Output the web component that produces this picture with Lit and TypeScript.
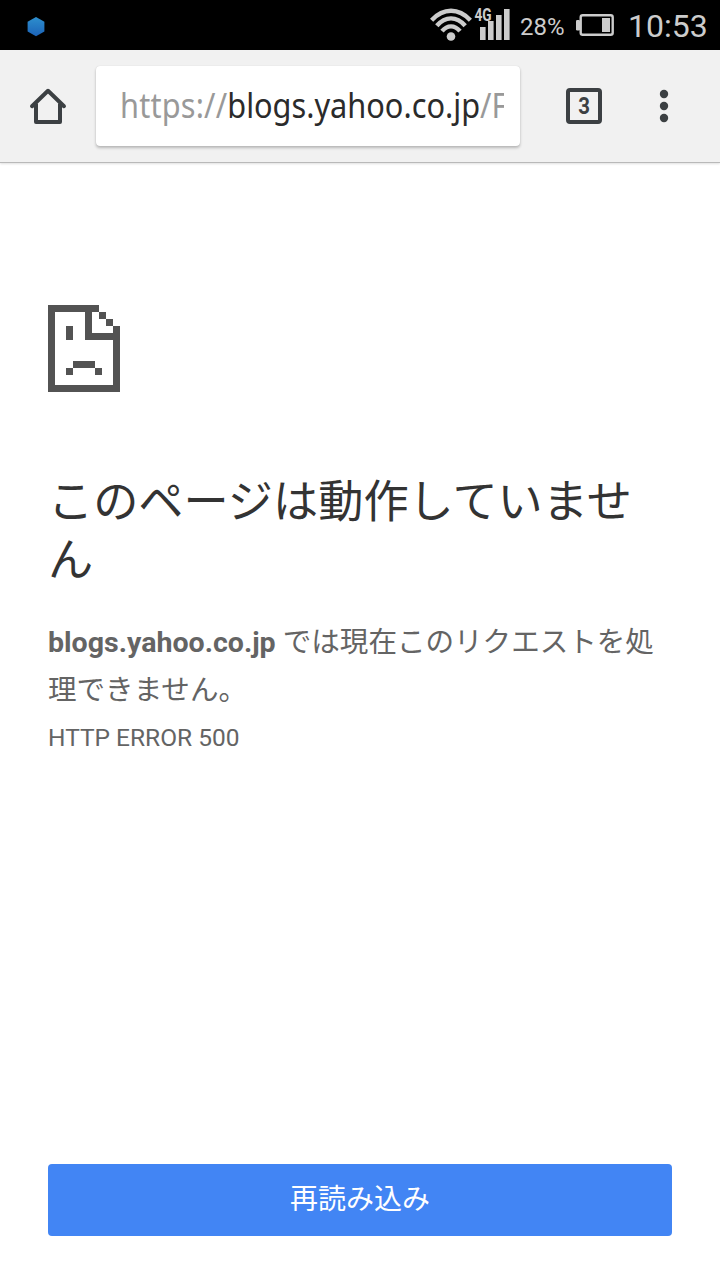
import { LitElement, html, css, svg } from 'lit';
import { customElement, property } from 'lit/decorators.js';

@customElement('status-bar')
export class StatusBar extends LitElement {
  @property() time = '';
  @property({ type: Number }) battery = 0;

  static styles = css`
    :host {
      display: flex;
      align-items: center;
      box-sizing: border-box;
      height: 50px;
      padding: 0 12px 0 27px;
      background: #000;
      color: #ccc;
      font-family: Roboto, sans-serif;
    }

    svg {
      display: block;
      flex: none;
    }

    .spacer {
      flex: 1;
    }

    .percent {
      width: 44px;
      margin: 3px 11px 0 9px;
      font-size: 24px;
      line-height: 28px;
      white-space: nowrap;
    }

    .time {
      width: 80px;
      margin: 1px 0 0 14px;
      font-size: 32px;
      line-height: 38px;
      white-space: nowrap;
    }

    .label {
      font-size: 17.5px;
      font-weight: 700;
    }
  `;

  _bars() {
    const tops = [27, 21, 15, 9];
    return tops.map((top, i) => svg`
      <rect x=${6 + i * 8} y=${top} width="5.6" height=${40 - top}></rect>
    `);
  }

  render() {
    return html`
      <svg width="18" height="50" viewBox="0 0 18 50">
        <defs>
          <linearGradient id="hex" x1="0" y1="0" x2="0" y2="1">
            <stop offset="0" stop-color="#2d8fce"></stop>
            <stop offset="1" stop-color="#1c63b8"></stop>
          </linearGradient>
        </defs>
        <path d="M9 17l8.4 4.8v9.6L9 36.2l-8.4-4.8v-9.6z" fill="url(#hex)"></path>
      </svg>
      <div class="spacer"></div>
      <svg width="44" height="50" viewBox="0 0 44 50" fill="none" stroke="#ccc" stroke-width="4.4">
        <path d="M1.6 20.2Q10.5 10.8 21 10.8T40.4 20.2"></path>
        <path d="M6.8 25.8Q13.2 18.4 21 18.4T35.2 25.8"></path>
        <path d="M12 31.2Q16 26.4 21 26.4T30 31.2"></path>
        <circle cx="21" cy="36.5" r="4.3" fill="#ccc" stroke="none"></circle>
      </svg>
      <svg width="37" height="50" viewBox="0 0 37 50" fill="#ccc">
        ${this._bars()}
        <g transform="translate(0.5 20.5) scale(0.78 1)">
          <text class="label">4G</text>
        </g>
      </svg>
      <span class="percent">${this.battery}%</span>
      <svg width="39" height="50" viewBox="0 0 39 50" fill="#ccc">
        <rect x="5.7" y="15.2" width="32" height="19.6" rx="2" fill="none" stroke="#ccc" stroke-width="2.4"></rect>
        <rect x="1" y="20" width="4" height="10.5" rx="1.2"></rect>
        <rect x="27" y="18" width="8" height="14"></rect>
      </svg>
      <span class="time">${this.time}</span>
    `;
  }
}

@customElement('browser-toolbar')
export class BrowserToolbar extends LitElement {
  @property() scheme = '';
  @property() host = '';
  @property() path = '';
  @property({ type: Number }) tabs = 0;

  static styles = css`
    :host {
      display: flex;
      align-items: center;
      box-sizing: border-box;
      height: 113px;
      border-bottom: 1px solid #b9b9b9;
      box-shadow: 0 1px 2px rgba(0, 0, 0, 0.12);
      background: #f1f1f1;
    }

    svg {
      display: block;
    }

    .home,
    .tabs,
    .menu {
      display: flex;
      justify-content: center;
      flex: none;
    }

    .home {
      width: 96px;
    }

    .url-box {
      width: 424px;
      height: 80px;
      box-sizing: border-box;
      padding: 0 16px 0 24px;
      border-radius: 4px;
      background: #fff;
      box-shadow: 0 2px 3px rgba(0, 0, 0, 0.24), 0 0 1px rgba(0, 0, 0, 0.15);
    }

    .clip {
      overflow: hidden;
      height: 80px;
    }

    .url {
      display: inline-block;
      font-family: 'Noto Sans', sans-serif;
      font-size: 34px;
      line-height: 78px;
      color: #999;
      white-space: nowrap;
      transform: scaleX(0.903);
      transform-origin: 0 0;
    }

    .scheme {
      letter-spacing: 0.2px;
    }

    .domain {
      color: #2b2b2b;
    }

    .tabs {
      width: 128px;
    }

    .count {
      box-sizing: border-box;
      width: 36px;
      height: 36px;
      border: 4px solid #3c4043;
      border-radius: 4px;
      color: #3c4043;
      font: 700 24px/28px Roboto, sans-serif;
      text-align: center;
    }

    .digit {
      display: block;
      transform: scaleX(0.85);
    }

    .menu {
      width: 32px;
    }
  `;

  render() {
    return html`
      <div class="home">
        <svg width="40" height="40" viewBox="0 0 40 40" fill="none" stroke="#3c4043" stroke-width="4" stroke-linejoin="round">
          <path d="M4 20.2L20 4.8L36 20.2" stroke-linecap="round"></path>
          <path d="M8 17.5V36H32V17.5"></path>
        </svg>
      </div>
      <div class="url-box">
        <div class="clip">
          <span class="url"><span class="scheme">${this.scheme}</span><span class="domain">${this.host}</span>${this.path}</span>
        </div>
      </div>
      <div class="tabs">
        <div class="count"><span class="digit">${this.tabs}</span></div>
      </div>
      <div class="menu">
        <svg width="8" height="32" viewBox="0 0 8 32" overflow="visible" fill="#3c4043">
          <circle cx="4" cy="4" r="4.2"></circle>
          <circle cx="4" cy="16" r="4.2"></circle>
          <circle cx="4" cy="28" r="4.2"></circle>
        </svg>
      </div>
    `;
  }
}

@customElement('app-root')
export class AppRoot extends LitElement {
  static styles = css`
    :host {
      display: flex;
      flex-direction: column;
      width: 720px;
      height: 1280px;
      overflow: hidden;
      background: #fff;
      font-family: Roboto, 'Noto Sans CJK JP', sans-serif;
    }

    status-bar,
    browser-toolbar {
      flex: none;
    }

    .error {
      display: flex;
      flex-direction: column;
      flex: 1;
      padding: 142px 48px 44px;
      color: #646464;
    }

    .icon {
      display: block;
      flex: none;
    }

    h1 {
      margin: 82px 0 0;
      font-size: 45.2px;
      font-weight: 400;
      line-height: 57.6px;
      color: #333;
    }

    .message {
      margin: 30px 0 0;
      font-size: 28.55px;
      line-height: 48px;
    }

    .code {
      margin-top: -1px;
      font-size: 24.5px;
      line-height: 48px;
    }

    .reload {
      width: 624px;
      height: 72px;
      margin-top: auto;
      padding: 0 0 1px;
      border: 0;
      border-radius: 4px;
      background: #4285f4;
      color: #fff;
      font: 400 28px/70px Roboto, 'Noto Sans CJK JP', sans-serif;
    }
  `;

  render() {
    return html`
      <status-bar time="10:53" battery="28"></status-bar>
      <browser-toolbar scheme="https://" host="blogs.yahoo.co.jp" path="/F" tabs="3"></browser-toolbar>
      <main class="error">
        <svg class="icon" width="72" height="87" viewBox="0 0 72 87" fill="#535353">
          <path d="M0 0H51V7H44V28H65V21H72V87H0zM7 7V80H65V35H37V7z" fill-rule="evenodd"></path>
          <path d="M51 7h7v7h-7zM58 14h7v7h-7zM18 21h7v14h-7zM25 56h22v7H25zM18 63h7v7h-7zM47 63h7v7h-7z"></path>
        </svg>
        <h1>このページは動作していません</h1>
        <p class="message"><strong>blogs.yahoo.co.jp</strong> では現在このリクエストを処理できません。</p>
        <div class="code">HTTP ERROR 500</div>
        <button class="reload">再読み込み</button>
      </main>
    `;
  }
}
